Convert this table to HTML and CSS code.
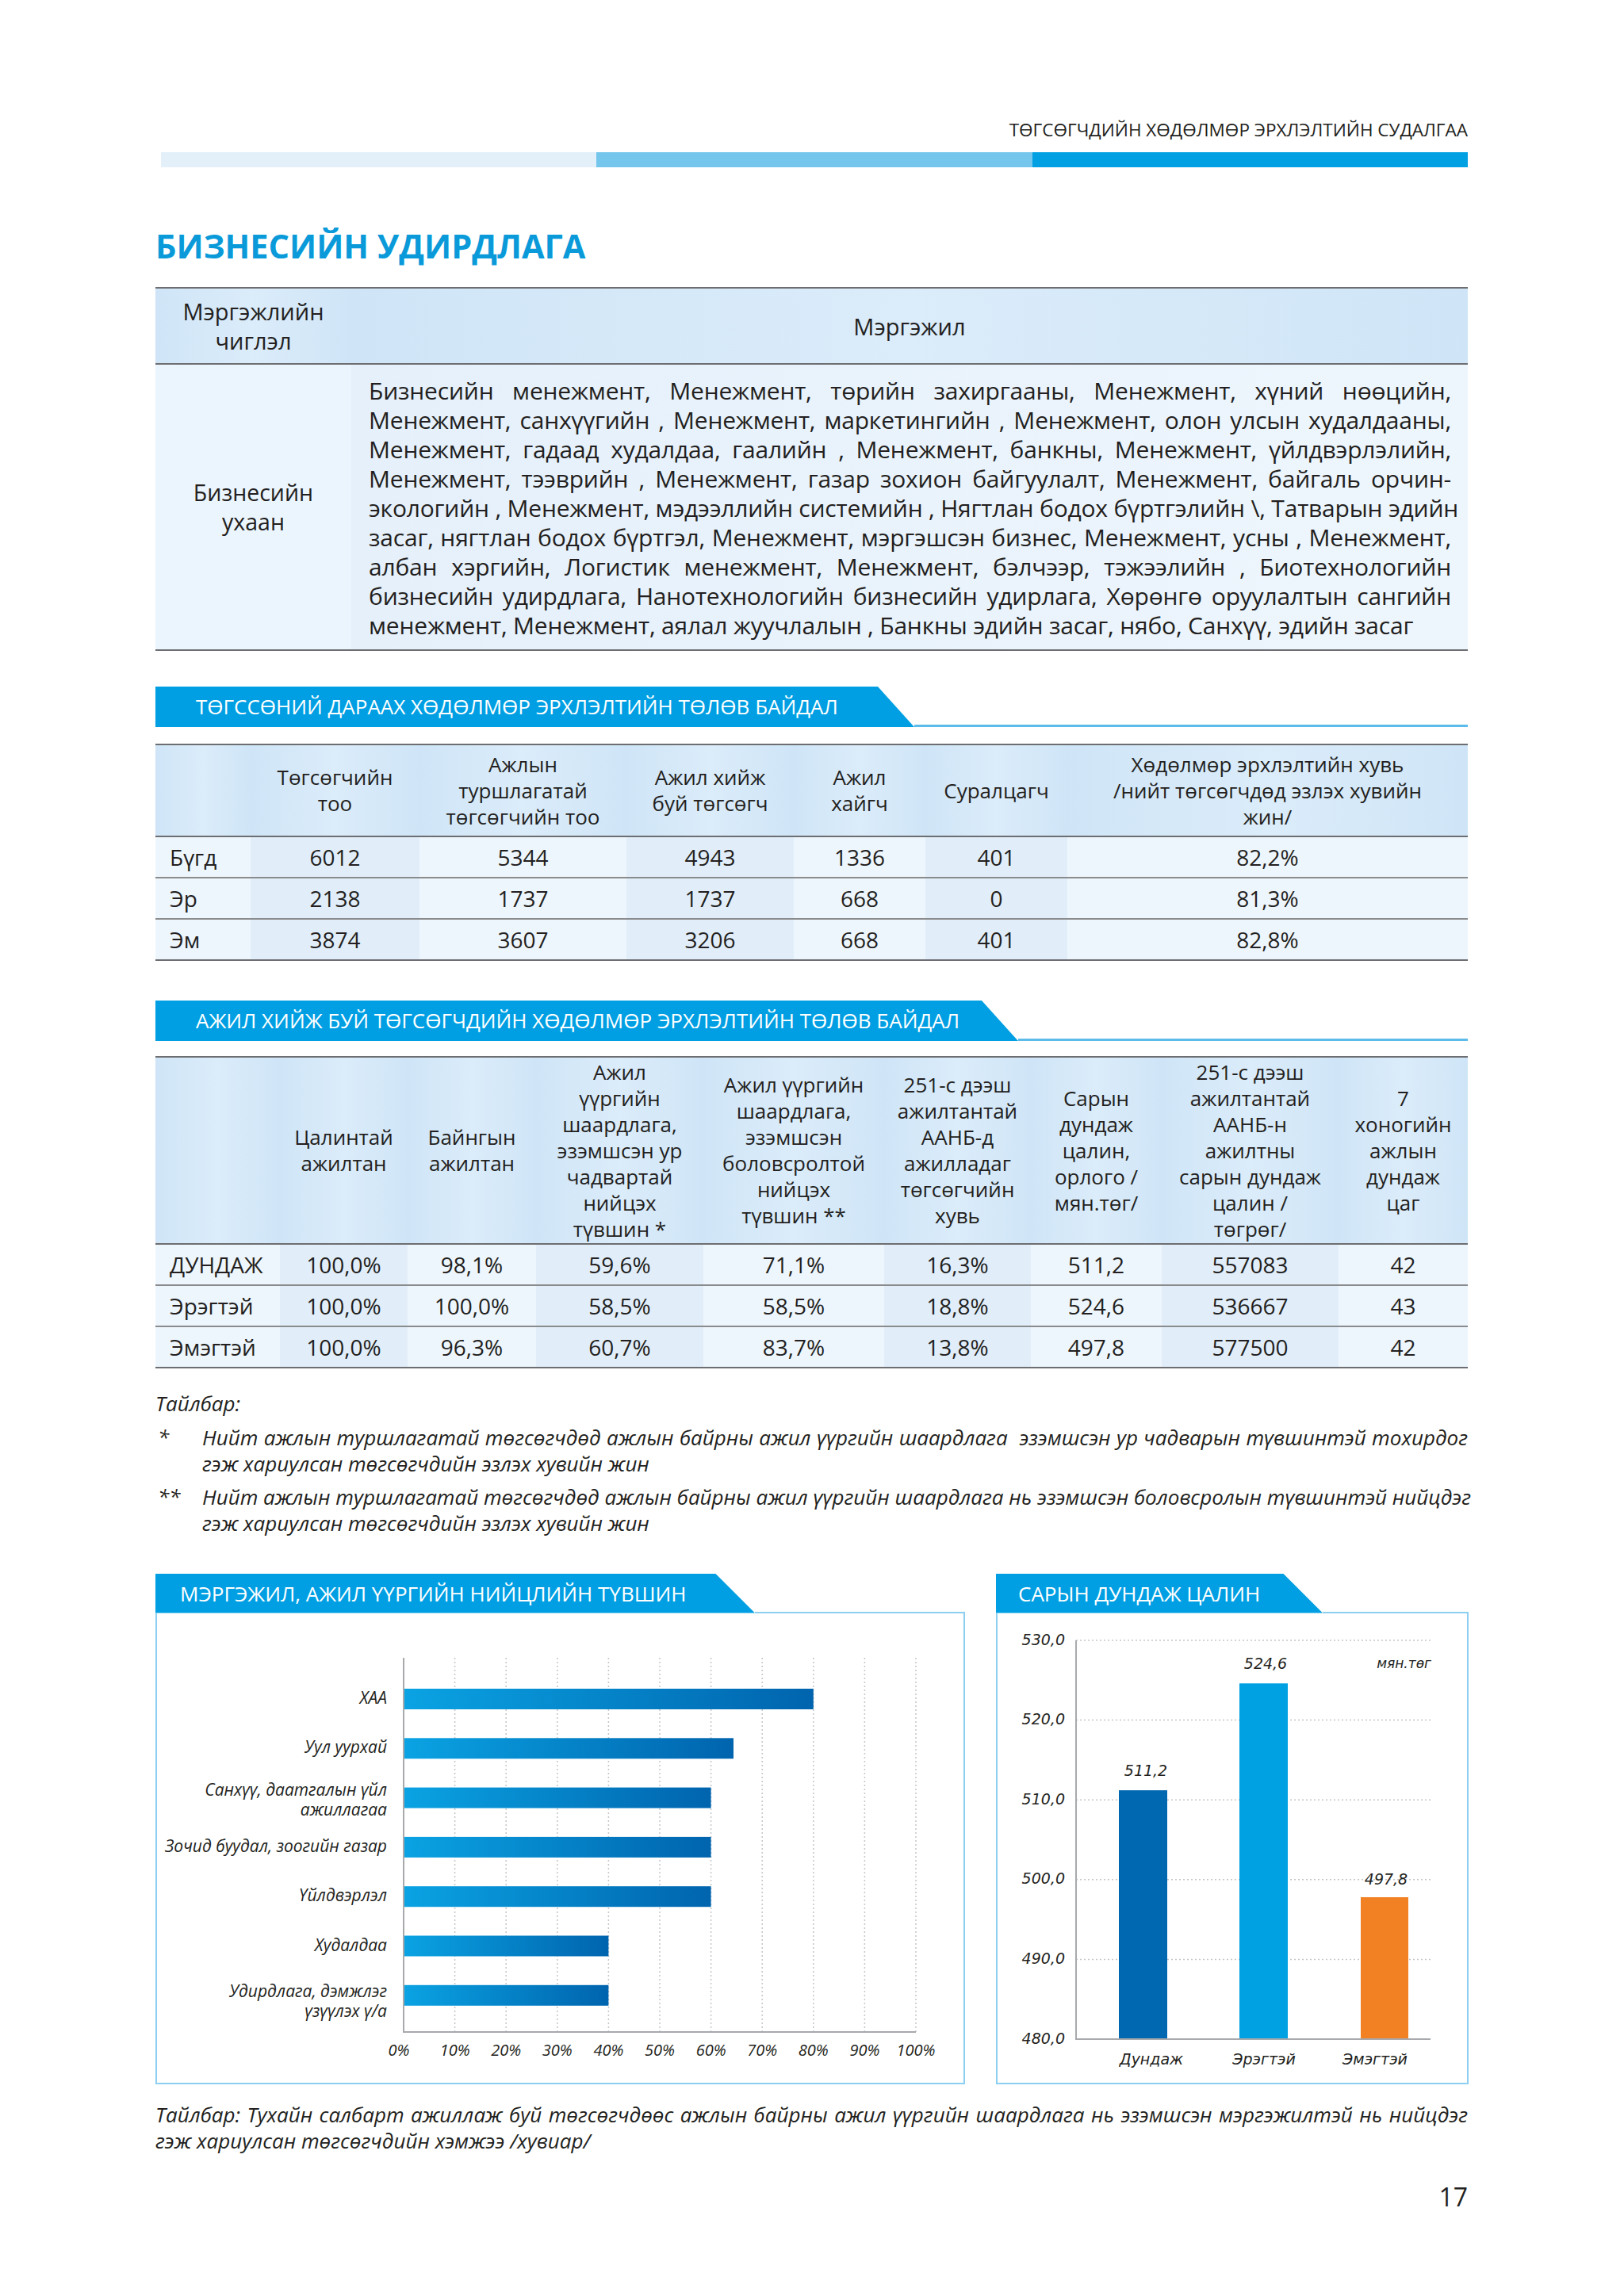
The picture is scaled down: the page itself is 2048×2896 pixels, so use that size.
FILE: index.html
```html
<!DOCTYPE html>
<html lang="mn">
<head>
<meta charset="utf-8">
<title>Бизнесийн удирдлага</title>
<link rel="stylesheet" href="styles.css">
</head>
<body>
<div class="page">
  <header class="running-head">ТӨГСӨГЧДИЙН ХӨДӨЛМӨР ЭРХЛЭЛТИЙН СУДАЛГАА</header>
  <div class="stripe"><span class="s1"></span><span class="s2"></span><span class="s3"></span></div>

  <h1 class="title">БИЗНЕСИЙН УДИРДЛАГА</h1>

  <table class="tbl t1">
    <colgroup><col class="t1-c1"><col></colgroup>
    <thead>
      <tr><th>Мэргэжлийн<br>чиглэл</th><th>Мэргэжил</th></tr>
    </thead>
    <tbody>
      <tr>
        <td class="t1-dir">Бизнесийн<br>ухаан</td>
        <td class="t1-list">
          <span class="jl">Бизнесийн менежмент, Менежмент, төрийн захиргааны, Менежмент, хүний нөөцийн,</span>
          <span class="jl">Менежмент, санхүүгийн , Менежмент, маркетингийн , Менежмент, олон улсын худалдааны,</span>
          <span class="jl">Менежмент, гадаад худалдаа, гаалийн , Менежмент, банкны, Менежмент, үйлдвэрлэлийн,</span>
          <span class="jl">Менежмент, тээврийн , Менежмент, газар зохион байгуулалт, Менежмент, байгаль орчин-</span>
          <span class="jl">экологийн , Менежмент, мэдээллийн системийн , Нягтлан бодох бүртгэлийн \, Татварын эдийн</span>
          <span class="jl">засаг, нягтлан бодох бүртгэл, Менежмент, мэргэшсэн бизнес, Менежмент, усны , Менежмент,</span>
          <span class="jl">албан хэргийн, Логистик менежмент, Менежмент, бэлчээр, тэжээлийн , Биотехнологийн</span>
          <span class="jl">бизнесийн удирдлага, Нанотехнологийн бизнесийн удирлага, Хөрөнгө оруулалтын сангийн</span>
          <span class="ll">менежмент, Менежмент, аялал жуучлалын , Банкны эдийн засаг, нябо, Санхүү, эдийн засаг</span>
        </td>
      </tr>
    </tbody>
  </table>

  <div class="banner b-t2"><div class="tab">ТӨГССӨНИЙ ДАРААХ ХӨДӨЛМӨР ЭРХЛЭЛТИЙН ТӨЛӨВ БАЙДАЛ</div><div class="rule"></div></div>

  <table class="tbl t2">
    <colgroup>
      <col class="w120"><col class="w213"><col class="w261"><col class="w211"><col class="w166"><col class="w179"><col>
    </colgroup>
    <thead>
      <tr>
        <th></th>
        <th>Төгсөгчийн<br>тоо</th>
        <th>Ажлын<br>туршлагатай<br>төгсөгчийн тоо</th>
        <th>Ажил хийж<br>буй төгсөгч</th>
        <th>Ажил<br>хайгч</th>
        <th>Суралцагч</th>
        <th>Хөдөлмөр эрхлэлтийн хувь<br>/нийт төгсөгчдөд эзлэх хувийн<br>жин/</th>
      </tr>
    </thead>
    <tbody>
      <tr><td class="rh">Бүгд</td><td class="sh">6012</td><td>5344</td><td class="sh">4943</td><td>1336</td><td class="sh">401</td><td>82,2%</td></tr>
      <tr><td class="rh">Эр</td><td class="sh">2138</td><td>1737</td><td class="sh">1737</td><td>668</td><td class="sh">0</td><td>81,3%</td></tr>
      <tr><td class="rh">Эм</td><td class="sh">3874</td><td>3607</td><td class="sh">3206</td><td>668</td><td class="sh">401</td><td>82,8%</td></tr>
    </tbody>
  </table>

  <div class="banner b-t3"><div class="tab">АЖИЛ ХИЙЖ БУЙ ТӨГСӨГЧДИЙН ХӨДӨЛМӨР ЭРХЛЭЛТИЙН ТӨЛӨВ БАЙДАЛ</div><div class="rule"></div></div>

  <table class="tbl t3">
    <colgroup>
      <col class="w157"><col class="w161"><col class="w162"><col class="w211"><col class="w228"><col class="w185"><col class="w165"><col class="w223"><col>
    </colgroup>
    <thead>
      <tr>
        <th></th>
        <th>Цалинтай<br>ажилтан</th>
        <th>Байнгын<br>ажилтан</th>
        <th>Ажил<br>үүргийн<br>шаардлага,<br>эзэмшсэн ур<br>чадвартай<br>нийцэх<br>түвшин *</th>
        <th>Ажил үүргийн<br>шаардлага,<br>эзэмшсэн<br>боловсролтой<br>нийцэх<br>түвшин **</th>
        <th>251-с дээш<br>ажилтантай<br>ААНБ-д<br>ажилладаг<br>төгсөгчийн<br>хувь</th>
        <th>Сарын<br>дундаж<br>цалин,<br>орлого /<br>мян.төг/</th>
        <th>251-с дээш<br>ажилтантай<br>ААНБ-н<br>ажилтны<br>сарын дундаж<br>цалин /<br>төгрөг/</th>
        <th>7<br>хоногийн<br>ажлын<br>дундаж<br>цаг</th>
      </tr>
    </thead>
    <tbody>
      <tr><td class="rh">ДУНДАЖ</td><td class="sh">100,0%</td><td>98,1%</td><td class="sh">59,6%</td><td>71,1%</td><td class="sh">16,3%</td><td>511,2</td><td class="sh">557083</td><td>42</td></tr>
      <tr><td class="rh">Эрэгтэй</td><td class="sh">100,0%</td><td>100,0%</td><td class="sh">58,5%</td><td>58,5%</td><td class="sh">18,8%</td><td>524,6</td><td class="sh">536667</td><td>43</td></tr>
      <tr><td class="rh">Эмэгтэй</td><td class="sh">100,0%</td><td>96,3%</td><td class="sh">60,7%</td><td>83,7%</td><td class="sh">13,8%</td><td>497,8</td><td class="sh">577500</td><td>42</td></tr>
    </tbody>
  </table>

  <div class="notes">
    <p class="note-title">Тайлбар:</p>
    <div class="note">
      <span class="mark">*</span>
      <p class="note-text"><span class="jl">Нийт ажлын туршлагатай төгсөгчдөд ажлын байрны ажил үүргийн шаардлага&nbsp; эзэмшсэн ур чадварын түвшинтэй тохирдог</span><span class="ll">гэж хариулсан төгсөгчдийн эзлэх хувийн жин</span></p>
    </div>
    <div class="note">
      <span class="mark">**</span>
      <p class="note-text"><span class="jl">Нийт ажлын туршлагатай төгсөгчдөд ажлын байрны ажил үүргийн шаардлага нь эзэмшсэн боловсролын түвшинтэй нийцдэг</span><span class="ll">гэж хариулсан төгсөгчдийн эзлэх хувийн жин</span></p>
    </div>
  </div>

  <div class="charts">
    <section class="card card-wide">
      <div class="banner b-c1"><div class="tab">МЭРГЭЖИЛ, АЖИЛ ҮҮРГИЙН НИЙЦЛИЙН ТҮВШИН</div><div class="rule"></div></div>
      <div class="plot">
        <svg class="chart" viewBox="0 0 1017 592" width="1017" height="592">
          <defs>
            <linearGradient id="barg" x1="0" y1="0" x2="1" y2="0">
              <stop offset="0" stop-color="#0aa3e3"/>
              <stop offset="1" stop-color="#0064ae"/>
            </linearGradient>
          </defs>
          <g class="grid">
            <line x1="375.6" y1="56" x2="375.6" y2="528"/>
            <line x1="440.2" y1="56" x2="440.2" y2="528"/>
            <line x1="504.8" y1="56" x2="504.8" y2="528"/>
            <line x1="569.4" y1="56" x2="569.4" y2="528"/>
            <line x1="634" y1="56" x2="634" y2="528"/>
            <line x1="698.6" y1="56" x2="698.6" y2="528"/>
            <line x1="763.2" y1="56" x2="763.2" y2="528"/>
            <line x1="827.8" y1="56" x2="827.8" y2="528"/>
            <line x1="892.4" y1="56" x2="892.4" y2="528"/>
            <line x1="957" y1="56" x2="957" y2="528"/>
          </g>
          <g class="bars">
            <rect x="311" y="95" width="516.8" height="26"/>
            <rect x="311" y="157.3" width="416" height="26"/>
            <rect x="311" y="219.6" width="387.6" height="26"/>
            <rect x="311" y="281.9" width="387.6" height="26"/>
            <rect x="311" y="344.2" width="387.6" height="26"/>
            <rect x="311" y="406.5" width="258.4" height="26"/>
            <rect x="311" y="468.8" width="258.4" height="26"/>
          </g>
          <g class="axis">
            <line x1="311" y1="56" x2="311" y2="529"/>
            <line x1="310" y1="528" x2="957" y2="528"/>
          </g>
          <g class="lab lab-end">
            <text x="290" y="108">ХАА</text>
            <text x="290" y="170">Уул уурхай</text>
            <text x="290" y="224">Санхүү, даатгалын үйл</text>
            <text x="290" y="249">ажиллагаа</text>
            <text x="290" y="295">Зочид буудал, зоогийн газар</text>
            <text x="290" y="357">Үйлдвэрлэл</text>
            <text x="290" y="420">Худалдаа</text>
            <text x="290" y="478">Удирдлага, дэмжлэг</text>
            <text x="290" y="503">үзүүлэх ү/а</text>
          </g>
          <g class="lab lab-mid lab-x">
            <text x="305" y="553">0%</text>
            <text x="375.6" y="553">10%</text>
            <text x="440.2" y="553">20%</text>
            <text x="504.8" y="553">30%</text>
            <text x="569.4" y="553">40%</text>
            <text x="634" y="553">50%</text>
            <text x="698.6" y="553">60%</text>
            <text x="763.2" y="553">70%</text>
            <text x="827.8" y="553">80%</text>
            <text x="892.4" y="553">90%</text>
            <text x="957" y="553">100%</text>
          </g>
        </svg>
      </div>
    </section>

    <section class="card card-narrow">
      <div class="banner b-c2"><div class="tab">САРЫН ДУНДАЖ ЦАЛИН</div><div class="rule"></div></div>
      <div class="plot">
        <svg class="chart chart-geo" viewBox="0 0 592 592" width="592" height="592">
          <g class="grid">
            <line x1="99" y1="34" x2="546" y2="34"/>
            <line x1="99" y1="134.6" x2="546" y2="134.6"/>
            <line x1="99" y1="235.2" x2="546" y2="235.2"/>
            <line x1="99" y1="335.8" x2="546" y2="335.8"/>
            <line x1="99" y1="436.4" x2="546" y2="436.4"/>
          </g>
          <rect class="bar-avg" x="153" y="223.1" width="61" height="313.9"/>
          <rect class="bar-men" x="305" y="88.3" width="61" height="448.7"/>
          <rect class="bar-women" x="458" y="358" width="60" height="179"/>
          <g class="axis">
            <line x1="99" y1="34" x2="99" y2="538"/>
            <line x1="98" y1="537" x2="546" y2="537"/>
          </g>
          <g class="lab lab-end">
            <text x="85" y="34">530,0</text>
            <text x="85" y="134.6">520,0</text>
            <text x="85" y="235.2">510,0</text>
            <text x="85" y="335.8">500,0</text>
            <text x="85" y="436.4">490,0</text>
            <text x="85" y="537">480,0</text>
            <text class="unit" x="547" y="64">мян.төг</text>
          </g>
          <g class="lab lab-mid">
            <text x="187" y="199">511,2</text>
            <text x="338" y="64">524,6</text>
            <text x="490" y="336">497,8</text>
            <text x="194" y="563">Дундаж</text>
            <text x="336" y="563">Эрэгтэй</text>
            <text x="476" y="563">Эмэгтэй</text>
          </g>
        </svg>
      </div>
    </section>
  </div>

  <p class="caption"><span class="jl">Тайлбар: Тухайн салбарт ажиллаж буй төгсөгчдөөс ажлын байрны ажил үүргийн шаардлага нь эзэмшсэн мэргэжилтэй нь нийцдэг</span><span class="ll">гэж хариулсан төгсөгчдийн хэмжээ /хувиар/</span></p>

  <footer class="folio">17</footer>
</div>
</body>
</html>
```

FILE: styles.css
```css
* { box-sizing: border-box; margin: 0; padding: 0; }

html, body { background: #ffffff; }

body {
  width: 2048px;
  font-family: "Open Sans", "Noto Sans", "DejaVu Sans", sans-serif;
  color: #231f20;
}

.page {
  padding: 149px 197px 60px 196px;
}

.running-head {
  text-align: right;
  font-size: 22.5px;
  line-height: 30px;
  color: #231f20;
}

.stripe {
  display: flex;
  height: 19px;
  margin: 13px 0 0 7px;
}
.stripe span { flex: 1; }
.s1 { background: #e3eff9; }
.s2 { background: #74c6ec; }
.s3 { background: #00a0e3; }

.title {
  margin-top: 74px;
  font-size: 41.5px;
  line-height: 50px;
  font-weight: 700;
  color: #0a9ad9;
}

/* ---------- tables ---------- */
.tbl {
  width: 100%;
  border-collapse: collapse;
  table-layout: fixed;
  border-top: 2px solid #6d6e71;
  border-bottom: 2px solid #6d6e71;
}
.tbl th {
  font-weight: 400;
  font-size: 26px;
  line-height: 33px;
  text-align: center;
  vertical-align: middle;
  background: linear-gradient(to right, #cfe5f7 0%, #dbecfa 50%, #cfe5f7 100%);
  border-bottom: 2px solid #6d6e71;
}
.tbl td {
  font-size: 28px;
  text-align: center;
  vertical-align: middle;
  background: #eef6fd;
}
.tbl tbody tr + tr td { border-top: 2px solid #8a8b8d; }
.tbl td.sh { background: #e1eefa; }
.tbl td.rh { text-align: left; padding-left: 18px; }

.t1 { margin-top: 27px; }
.t1-c1 { width: 247px; }
.t1 thead tr { height: 96px; }
.t1 th { font-size: 29px; line-height: 37px; }
.t1 td.t1-dir {
  background: #ebf5fe;
  font-size: 28.5px;
  line-height: 37px;
}
.t1 td.t1-list {
  background: linear-gradient(to right, #e5f0fb, #eef6fd);
  padding: 14px 21px 12px 22px;
  font-size: 30px;
  letter-spacing: -0.2px;
  line-height: 37px;
  text-align: left;
}
.jl {
  display: block;
  white-space: nowrap;
  text-align: justify;
  text-align-last: justify;
}
.ll {
  display: block;
  white-space: nowrap;
}

.t2 { margin-top: 21px; }
.t2 thead tr { height: 116px; }
.t2 tbody tr { height: 52px; }

.t3 { margin-top: 19px; }
.t3 thead tr { height: 236px; }
.t3 tbody tr { height: 52px; }

.w120 { width: 120px; } .w213 { width: 213px; } .w261 { width: 261px; }
.w211 { width: 211px; } .w166 { width: 166px; } .w179 { width: 179px; }
.w157 { width: 157px; } .w161 { width: 161px; } .w162 { width: 162px; }
.w228 { width: 228px; } .w185 { width: 185px; } .w165 { width: 165px; }
.w223 { width: 223px; }

/* ---------- section banners ---------- */
.banner {
  display: flex;
  height: 51px;
}
.tab {
  flex: none;
  background: #009fe3;
  color: #ffffff;
  font-size: 26px;
  line-height: 51px;
  padding-left: 51px;
  white-space: nowrap;
  clip-path: polygon(0 0, calc(100% - 46px) 0, 100% 100%, 0 100%);
}
.rule {
  flex: 1;
  align-self: flex-end;
  height: 3px;
  background: #5cbbe9;
}
.b-t2 { margin-top: 45px; }
.b-t2 .tab { width: 957px; }
.b-t3 { margin-top: 50px; }
.b-t3 .tab { width: 1088px; }

/* ---------- notes ---------- */
.notes {
  margin-top: 28px;
  font-style: italic;
  font-size: 26px;
  line-height: 33.5px;
}
.note-title { margin-bottom: 9px; }
.note { display: flex; margin-bottom: 8px; }
.mark { flex: none; width: 59px; padding-left: 3px; }
.note-text { flex: 1; }

/* ---------- charts ---------- */
.charts {
  display: flex;
  gap: 39px;
  margin-top: 46px;
}
.card { display: flex; flex-direction: column; }
.card-wide { width: 1021px; }
.card-narrow { width: 596px; }
.card .banner { height: 50px; }
.card .tab { line-height: 50px; clip-path: polygon(0 0, calc(100% - 50px) 0, 100% 100%, 0 100%); }
.card .rule { height: 2px; background: #8ccff0; }
.b-c1 .tab { width: 756px; padding-left: 31px; }
.b-c2 .tab { width: 412px; padding-left: 28px; }
.plot {
  height: 594px;
  border: 2px solid #8ccff0;
  border-top: 0;
}
.chart { display: block; }
.grid line { stroke: #c4c6c8; stroke-width: 1.5; stroke-dasharray: 2 3; }
.axis line { stroke: #a7a9ac; stroke-width: 2; }
.bars rect { fill: url(#barg); }
.bar-avg { fill: #0067b1; }
.bar-men { fill: #00a1e2; }
.bar-women { fill: #f28124; }
.lab text {
  font-family: "Open Sans", "Noto Sans", sans-serif;
  font-style: italic;
  font-size: 21px;
  fill: #231f20;
  dominant-baseline: middle;
}
.lab-x text { font-size: 20px; }
.chart-geo .lab text {
  font-family: "DejaVu Sans", "Open Sans", sans-serif;
  font-size: 19px;
}
.chart-geo .lab text.unit { font-size: 17px; }
.lab-end text { text-anchor: end; }
.lab-mid text { text-anchor: middle; }

/* ---------- caption & folio ---------- */
.caption {
  margin-top: 22px;
  font-style: italic;
  font-size: 26px;
  line-height: 33px;
}
.folio {
  margin-top: 34px;
  text-align: right;
  font-size: 32px;
  line-height: 40px;
}
```
